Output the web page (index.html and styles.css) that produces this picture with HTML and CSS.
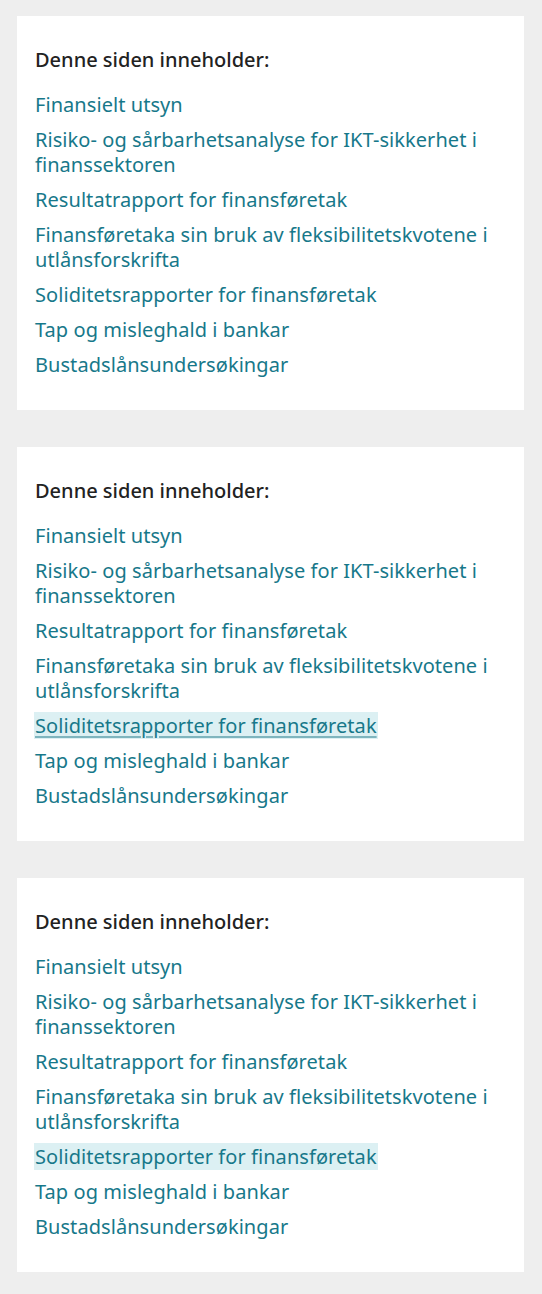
FILE: index.html
```html
<!DOCTYPE html>
<html lang="nn">
<head>
    <meta charset="UTF-8">
    <meta name="viewport" content="width=device-width, initial-scale=1.0">
    <title>Denne siden inneholder</title>
    <link rel="stylesheet" href="styles.css">
</head>
<body>

    <!-- Default state -->
    <nav class="toc">
        <h2>Denne siden inneholder:</h2>
        <ul>
            <li><a href="#utsyn">Finansielt utsyn</a></li>
            <li><a href="#ikt">Risiko- og sårbarhetsanalyse for IKT-sikkerhet i finanssektoren</a></li>
            <li><a href="#resultat">Resultatrapport for finansføretak</a></li>
            <li><a href="#fleks">Finansføretaka sin bruk av fleksibilitetskvotene i utlånsforskrifta</a></li>
            <li><a href="#soliditet">Soliditetsrapporter for finansføretak</a></li>
            <li><a href="#tap">Tap og misleghald i bankar</a></li>
            <li><a href="#bustad">Bustadslånsundersøkingar</a></li>
        </ul>
    </nav>

    <!-- Hover state -->
    <nav class="toc">
        <h2>Denne siden inneholder:</h2>
        <ul>
            <li><a href="#utsyn">Finansielt utsyn</a></li>
            <li><a href="#ikt">Risiko- og sårbarhetsanalyse for IKT-sikkerhet i finanssektoren</a></li>
            <li><a href="#resultat">Resultatrapport for finansføretak</a></li>
            <li><a href="#fleks">Finansføretaka sin bruk av fleksibilitetskvotene i utlånsforskrifta</a></li>
            <li><a href="#soliditet" class="is-hover">Soliditetsrapporter for finansføretak</a></li>
            <li><a href="#tap">Tap og misleghald i bankar</a></li>
            <li><a href="#bustad">Bustadslånsundersøkingar</a></li>
        </ul>
    </nav>

    <!-- Active state -->
    <nav class="toc">
        <h2>Denne siden inneholder:</h2>
        <ul>
            <li><a href="#utsyn">Finansielt utsyn</a></li>
            <li><a href="#ikt">Risiko- og sårbarhetsanalyse for IKT-sikkerhet i finanssektoren</a></li>
            <li><a href="#resultat">Resultatrapport for finansføretak</a></li>
            <li><a href="#fleks">Finansføretaka sin bruk av fleksibilitetskvotene i utlånsforskrifta</a></li>
            <li><a href="#soliditet" class="is-active">Soliditetsrapporter for finansføretak</a></li>
            <li><a href="#tap">Tap og misleghald i bankar</a></li>
            <li><a href="#bustad">Bustadslånsundersøkingar</a></li>
        </ul>
    </nav>

</body>
</html>
```

FILE: styles.css
```css
body {
    font-family: 'Noto Sans', 'Open Sans', sans-serif;
    background-color: #eeeeee;
    margin: 0;
    padding: 16px 18px 22px 17px;
    display: flex;
    flex-direction: column;
    gap: 37px;
}

.toc {
    background-color: #ffffff;
    height: 394px;
    box-sizing: border-box;
    padding: 31px 18px 0 18px;
}

.toc h2 {
    margin: 0 0 19px 0;
    font-size: 20px;
    font-weight: 500;
    line-height: 26px;
    color: #222222;
}

.toc ul {
    list-style: none;
    margin: 0;
    padding: 0;
    display: flex;
    flex-direction: column;
    gap: 10px;
}

.toc li {
    font-size: 20px;
    line-height: 25px;
    letter-spacing: 0.06px;
}

.toc a {
    color: #17788a;
    text-decoration: none;
}

.toc a.is-hover,
.toc a.is-active {
    background-color: #dcf0f3;
    padding: 0 1px;
    margin: 0 -1px;
}

.toc a.is-hover {
    text-decoration: underline;
    text-decoration-color: #7fb5be;
    text-decoration-thickness: 2px;
    text-underline-offset: 3px;
}
```
